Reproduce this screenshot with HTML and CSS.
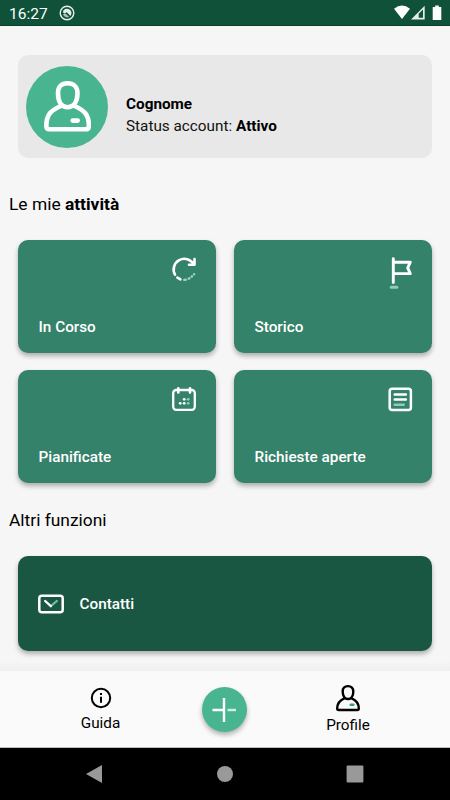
FILE: index.html
```html
<!DOCTYPE html>
<html lang="it">
<head>
    <meta charset="UTF-8">
    <meta name="viewport" content="width=device-width, initial-scale=1.0">
    <title>Profilo</title>
    <link rel="stylesheet" href="styles.css">
</head>
<body>
    <div class="status-bar">
        <span class="clock">16:27</span>
        <svg class="status-app" width="16" height="16" viewBox="0 0 16 16">
            <circle cx="8" cy="8" r="6.8" fill="none" stroke="#e8f0ec" stroke-width="1.4"/>
            <path d="M3.8 7.2a4.4 4.4 0 1 1 7.6 3.8L7.8 7.3 5.6 8.6z" fill="#e8f0ec"/>
            <path d="M4 9.3l2.5-.8 3.8 3.6A4.6 4.6 0 0 1 4 9.3z" fill="#a9c4b8"/>
        </svg>
        <svg class="status-icons" width="50" height="16" viewBox="0 0 50 16">
            <path d="M1 3.800Q9 -2.600 17 3.800L9 14z" fill="#fff"/>
            <path d="M31.700 .8v13.700H18z" fill="#e6eeea"/>
            <path d="M30 4.500v8.300h-4.300V8.800z" fill="#0f5139"/>
            <path d="M39.700 2h2.500V.5h3.600V2h2.500v13h-8.600z" fill="#fff"/>
        </svg>
    </div>

    <main class="content">
        <section class="account">
            <div class="avatar">
                <svg width="48" height="52" viewBox="0 0 48 52" fill="none" stroke="#fff" stroke-width="4.600" stroke-linecap="round" stroke-linejoin="round">
                    <path d="M24.500 2.300C18.500 2.300 15 6 15 12c0 9 3.500 14.200 9.500 14.200S34.500 21 34.500 12c0-6-4-9.700-10-9.700z"/>
                    <path d="M18 25C8.500 29 3.300 33 3.300 45q0 3.300 3.300 3.300h36q3.300 0 3.300-3.300C46 33 40.500 29 31.500 25"/>
                    <path d="M29.700 39.600h5"/>
                </svg>
            </div>
            <div class="account-text">
                <div><b>Cognome</b></div>
                <div>Status account: <b>Attivo</b></div>
            </div>
        </section>

        <h2>Le mie <b>attività</b></h2>
        <div class="tiles">
            <div class="tile">
                <svg width="26" height="26" viewBox="0 0 26 26" fill="none" stroke="#fff" stroke-width="2.600" stroke-linecap="round">
                    <path d="M4 18.700A10.600 10.600 0 0 1 22.800 8.300"/>
                    <path d="M18 8.800h5.500V3" stroke-linejoin="round"/>
                    <path d="M6.400 21.600l3 1.800"/>
                    <path d="M13.200 23.900l1.500-.2M17.700 22.700l.7-.4M20.700 20.600l.3-.3M23.100 18.200v-.1" stroke="#9cd3bd" stroke-width="2.400"/>
                </svg>
                <span>In Corso</span>
            </div>
            <div class="tile">
                <svg width="26" height="34" viewBox="0 0 26 34" fill="none" stroke="#fff" stroke-width="2.900" stroke-linecap="round" stroke-linejoin="round">
                    <path d="M6.300 2.800v23.700M6.300 6.200h17l-2.600 5.600 2.600 5.800h-17"/>
                    <path d="M4.300 31.200h5.500" stroke="#8fceb5" stroke-width="3"/>
                </svg>
                <span>Storico</span>
            </div>
            <div class="tile">
                <svg width="26" height="26" viewBox="0 0 26 26" fill="none" stroke="#fff" stroke-width="2.300" stroke-linecap="round">
                    <rect x="2.200" y="4" width="21.600" height="19.800" rx="3"/>
                    <path d="M7.300 2.400v4M19 2.400v4" stroke-width="2.700"/>
                    <g fill="#fff" stroke="none">
                        <circle cx="13.200" cy="13.300" r="1.400"/>
                        <circle cx="9.200" cy="17.300" r="1.400"/>
                        <circle cx="13.200" cy="17.300" r="1.400"/>
                    </g>
                    <g fill="#8fceb5" stroke="none">
                        <circle cx="17.200" cy="13.300" r="1.400"/>
                        <circle cx="17.200" cy="17.300" r="1.400"/>
                    </g>
                </svg>
                <span>Pianificate</span>
            </div>
            <div class="tile">
                <svg width="26" height="26" viewBox="0 0 26 26" fill="none" stroke="#fff" stroke-width="2.500" stroke-linecap="round">
                    <rect x="2.700" y="2.700" width="21.200" height="21.200" rx="2.500"/>
                    <path d="M7.700 8.400h11.200M7.700 13.500h11.200"/>
                    <path d="M7.700 18.700h9" stroke="#8fceb5"/>
                </svg>
                <span>Richieste aperte</span>
            </div>
        </div>

        <h2>Altri funzioni</h2>
        <div class="contact">
            <svg width="26" height="20" viewBox="0 0 26 20" fill="none" stroke-linecap="round" stroke-linejoin="round">
                <rect x="1.300" y="1.800" width="23.400" height="16.400" rx="2.500" stroke="#fff" stroke-width="2.500"/>
                <path d="M13 12l5.800-5" stroke="#6fc3a3" stroke-width="2.300"/>
                <path d="M7.200 7l5.600 5.200" stroke="#fff" stroke-width="2.300"/>
            </svg>
            <span>Contatti</span>
        </div>
    </main>

    <nav class="tab-bar">
        <div class="tab">
            <svg width="22" height="22" viewBox="0 0 22 22" fill="none" stroke="#000" stroke-width="2">
                <circle cx="11" cy="11" r="9.200"/>
                <path d="M11 9.800v6M11 6v2"/>
            </svg>
            <span>Guida</span>
        </div>
        <div class="add">
            <svg width="24" height="24" viewBox="0 0 24 24" stroke="#fff" stroke-width="2.400">
                <path d="M12 0v24M.5 12h11"/>
                <path d="M15.500 12h8.500" stroke="#d2ede2"/>
            </svg>
        </div>
        <div class="tab tab-profile">
            <svg width="26" height="28" viewBox="0 0 26 28" fill="none" stroke="#000" stroke-width="2.400" stroke-linecap="round" stroke-linejoin="round">
                <path d="M13 2.100c-3.400 0-5.300 2.100-5.300 5.300 0 4.400 1.900 7.600 5.300 7.600s5.300-3.200 5.300-7.600c0-3.200-1.900-5.300-5.300-5.300z"/>
                <path d="M9.400 14.300C4.300 16.400 2.200 19 2.200 24.500q0 1.500 1.500 1.500h18.600q1.500 0 1.500-1.500c0-5.500-2.100-8.100-7.200-10.200"/>
                <path d="M15.800 20.800h2.500" stroke="#27a862" stroke-width="2.600"/>
            </svg>
            <span>Profile</span>
        </div>
    </nav>

    <div class="system-nav">
        <svg width="18" height="20" viewBox="0 0 18 20"><path d="M1 10L17 1v18z" fill="#999"/></svg>
        <svg width="18" height="18" viewBox="0 0 18 18"><circle cx="9" cy="9" r="8" fill="#999"/></svg>
        <svg width="18" height="18" viewBox="0 0 18 18"><rect x=".6" y=".6" width="16.800" height="16.800" rx="1" fill="#999"/></svg>
    </div>
</body>
</html>
```
FILE: styles.css
```css
* {
    box-sizing: border-box;
}
body {
    margin: 0;
    width: 450px;
    height: 800px;
    display: flex;
    flex-direction: column;
    overflow: hidden;
    background-color: #f6f6f6;
    color: #000;
    font-family: Roboto, sans-serif;
    font-size: 15.3px;
}
svg {
    display: block;
    flex: none;
}
b {
    font-weight: 700;
}
.status-bar {
    height: 26px;
    flex: none;
    display: flex;
    align-items: center;
    padding: 0 7px 0 9px;
    background-color: #0f5139;
    border-bottom: 1px solid #07412b;
    color: #fff;
}
.clock {
    font-size: 15.5px;
    line-height: 26px;
    width: 50px;
    padding-top: 2px;
}
.status-icons {
    margin-left: auto;
}
.content {
    flex: 1;
    padding-top: 29px;
    background: linear-gradient(to bottom, #f6f6f6 98.5%, #efefef);
}
.account {
    height: 103px;
    margin: 0 18px 0 17.5px;
    padding-left: 8.5px;
    display: flex;
    align-items: center;
    background-color: #e8e8e8;
    border-radius: 10px;
}
.avatar {
    width: 82px;
    height: 82px;
    border-radius: 50%;
    background-color: #49b590;
    display: flex;
    align-items: center;
    justify-content: center;
}
.account-text {
    margin-left: 18px;
    padding-top: 17px;
    line-height: 22px;
    color: #111;
}
.account-text b {
    color: #000;
}
h2 {
    margin: 0 9px;
    padding-top: 35px;
    height: 82px;
    font-size: 17.4px;
    line-height: 22px;
    font-weight: 400;
}
.tiles {
    display: grid;
    grid-template-columns: 1fr 1fr;
    grid-auto-rows: 112.5px;
    gap: 17.5px;
    margin: 0 18px 0 17.5px;
}
.tile {
    display: flex;
    flex-direction: column;
    justify-content: space-between;
    padding: 16px 19px 17px 21px;
    background-color: #35826a;
    border-radius: 10px;
    box-shadow: 0 3px 5px rgba(0, 0, 0, 0.3);
    color: #fff;
    font-weight: 500;
    line-height: 18px;
}
.tile svg {
    align-self: flex-end;
}
.tiles + h2 {
    height: 73.5px;
    padding-top: 26px;
}
.contact {
    height: 95px;
    margin: 0 18px 0 17.5px;
    padding-left: 20.5px;
    display: flex;
    align-items: center;
    gap: 15.5px;
    background-color: #1a5742;
    border-radius: 10px;
    box-shadow: 0 3px 5px rgba(0, 0, 0, 0.3);
    color: #fff;
    font-weight: 500;
}
.tab-bar {
    height: 77px;
    flex: none;
    display: flex;
    justify-content: space-between;
    padding: 0 52px;
    background-color: #fafafa;
    border-bottom: 1px solid #bbb;
}
.tab {
    width: 97px;
    padding-top: 16px;
    display: flex;
    flex-direction: column;
    align-items: center;
    line-height: 20px;
    gap: 4px;
}
.tab-profile {
    width: 100px;
    padding-top: 13px;
    gap: 3px;
}
.add {
    width: 45px;
    height: 45px;
    margin-top: 16px;
    border-radius: 50%;
    background-color: #49b590;
    box-shadow: 0 3px 5px rgba(0, 0, 0, 0.3);
    display: flex;
    align-items: center;
    justify-content: center;
}
.tab-bar .add {
    margin-left: 1px;
}
.system-nav {
    height: 52px;
    flex: none;
    display: flex;
    align-items: center;
    justify-content: space-between;
    padding: 0 86px 0 85px;
    background-color: #000;
}
```
